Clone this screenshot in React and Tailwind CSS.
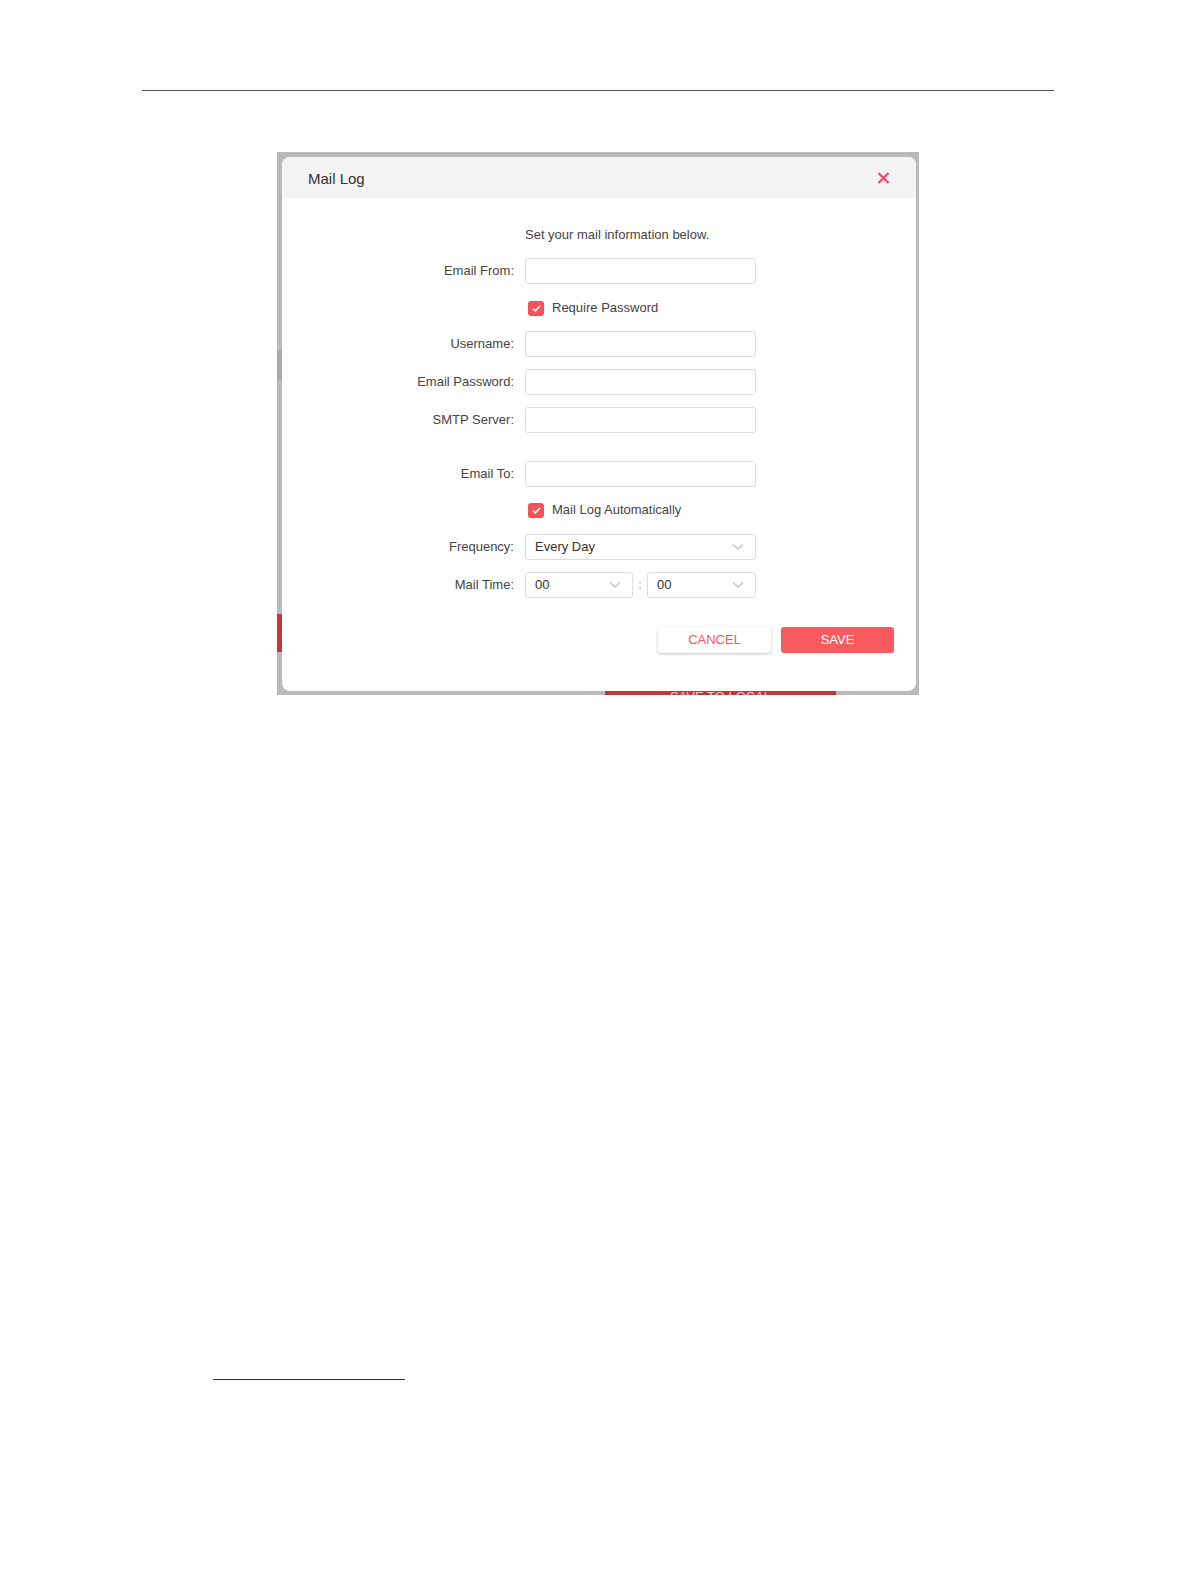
import React, { useState } from 'react'

const font = { fontFamily: '"Liberation Sans", Arial, sans-serif' }

const Chevron = () => (
  <svg width="12" height="8" viewBox="0 0 12 8" fill="none">
    <path d="M1 1.5 L6 6 L11 1.5" stroke="#c4c4c4" strokeWidth="1.5" />
  </svg>
)

const CheckBox = ({ checked, onChange, label }) => (
  <div className="flex items-center h-[26px] ml-[246px]">
    <button
      onClick={onChange}
      className={`w-[16px] h-[15px] rounded-[3px] flex items-center justify-center ${checked ? 'bg-[#f4515a]' : 'bg-white border border-[#ccc]'}`}
    >
      {checked && (
        <svg width="9" height="7" viewBox="0 0 9 7" fill="none">
          <path d="M1 3.6 L3.4 5.8 L8 1" stroke="white" strokeWidth="1.6" />
        </svg>
      )}
    </button>
    <span className="ml-[8px] text-[13px] text-[#444]">{label}</span>
  </div>
)

const Field = ({ label, className = '', children }) => (
  <div className={`flex items-center h-[26px] ${className}`}>
    <label className="w-[232px] text-right text-[13px] text-[#444]">{label}</label>
    <div className="ml-[11px] w-[231px] h-[26px]">
      {children || <input className="w-full h-full border border-[#dcdcdc] rounded-[3px] px-[9px] text-[13px] outline-none" />}
    </div>
  </div>
)

const Select = ({ value, width }) => (
  <div className={`h-[26px] ${width} border border-[#dcdcdc] rounded-[3px] flex items-center justify-between pl-[9px] pr-[11px]`}>
    <span className="text-[13px] text-[#333]">{value}</span>
    <Chevron />
  </div>
)

export default function App() {
  const [requirePw, setRequirePw] = useState(true)
  const [autoMail, setAutoMail] = useState(true)

  return (
    <div className="w-[1196px] min-h-[1582px] bg-white flex flex-col" style={font}>
      <div className="mt-[90px] ml-[142px] w-[912px] h-[1px] bg-[#555]" />

      {/* screenshot frame */}
      <div className="mt-[61px] ml-[277px] w-[642px] h-[543px] bg-[#bababa] flex flex-col">
        <div className="flex pt-[5px]">
          <div className="w-[5px] flex flex-col">
            <div className="h-[193px]" />
            <div className="h-[30px] bg-[#aaaaaa]" />
            <div className="h-[234px]" />
            <div className="h-[38px] bg-[#c8363d]" />
          </div>

          <div className="w-[634px] h-[534px] bg-white rounded-[8px] flex flex-col">
            <div className="h-[41px] bg-[#f4f4f4] rounded-t-[8px] flex items-center justify-between pl-[26px] pr-[26px] pt-[3px]">
              <span className="text-[15px] text-[#333]">Mail Log</span>
              <button className="mt-[-2px]">
                <svg width="13" height="12" viewBox="0 0 13 12" fill="none">
                  <path d="M1.5 1 L11.5 11 M11.5 1 L1.5 11" stroke="#f0506e" strokeWidth="2.4" />
                </svg>
              </button>
            </div>

            <div className="mt-[29px] ml-[243px] text-[13px] leading-[16px] text-[#444]">
              Set your mail information below.
            </div>

            <Field label="Email From:" className="mt-[15px]" />
            <div className="mt-[11px]">
              <CheckBox checked={requirePw} onChange={() => setRequirePw(!requirePw)} label="Require Password" />
            </div>
            <Field label="Username:" className="mt-[10px]" />
            <Field label="Email Password:" className="mt-[12px]" />
            <Field label="SMTP Server:" className="mt-[12px]" />
            <Field label="Email To:" className="mt-[28px]" />
            <div className="mt-[10px]">
              <CheckBox checked={autoMail} onChange={() => setAutoMail(!autoMail)} label="Mail Log Automatically" />
            </div>
            <Field label="Frequency:" className="mt-[11px]">
              <Select value="Every Day" width="w-[231px]" />
            </Field>
            <Field label="Mail Time:" className="mt-[12px]">
              <div className="flex items-center">
                <Select value="00" width="w-[108px]" />
                <span className="w-[14px] text-center text-[13px] text-[#999]">:</span>
                <Select value="00" width="w-[109px]" />
              </div>
            </Field>

            <div className="mt-[29px] flex justify-end gap-[10px] pr-[22px]">
              <button className="w-[113px] h-[26px] bg-white rounded-[3px] shadow-[0_1px_3px_rgba(0,0,0,0.25)] text-[13px] text-[#f2566a]">
                CANCEL
              </button>
              <button className="w-[113px] h-[26px] bg-[#f75b5f] rounded-[3px] text-[13px] text-white">
                SAVE
              </button>
            </div>
          </div>
        </div>

        <div className="flex pl-[328px]">
          <div className="w-[231px] h-[4px] bg-[#c1363d] overflow-hidden flex justify-center">
            <span className="text-[13px] leading-[13px] text-[#f3c9cb] mt-[-1px]">SAVE TO LOCAL</span>
          </div>
        </div>
      </div>

      <div className="mt-[684px] ml-[213px] w-[192px] h-[1px] bg-[#333]" />
    </div>
  )
}
